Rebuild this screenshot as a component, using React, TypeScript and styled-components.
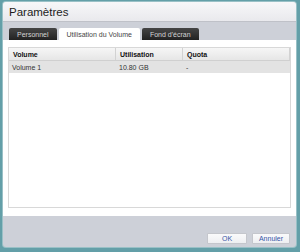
import React from 'react'
import styled, { createGlobalStyle } from 'styled-components'

const GlobalStyle = createGlobalStyle`
  html, body {
    margin: 0;
    padding: 0;
    background: #639fa8;
  }
  * {
    box-sizing: border-box;
  }
`

const Desktop = styled.div`
  width: 300px;
  height: 252px;
  padding: 2px 4px 5px 3px;
  background: #639fa8;
  font-family: 'Liberation Sans', Arial, sans-serif;
`

const Window = styled.div`
  display: flex;
  flex-direction: column;
  height: 100%;
  border-radius: 3px;
  overflow: hidden;
  background: #cdd0d8;
  box-shadow: 0 0 0 1px rgba(255, 255, 255, 0.35);
`

const TitleBar = styled.div`
  height: 20px;
  display: flex;
  align-items: center;
  padding-left: 6px;
  font-size: 11.5px;
  color: #1c1c1c;
  background: linear-gradient(#f7f7f9, #e9e9ed);
  border-bottom: 1px solid #bfc1c8;
`

const TabBand = styled.div`
  display: flex;
  align-items: flex-end;
  gap: 2px;
  padding: 6px 0 0 6px;
`

const Tab = styled.div<{ $active?: boolean }>`
  height: 12px;
  padding: 0 8px;
  display: flex;
  align-items: center;
  font-size: 7px;
  border-radius: 2px 2px 0 0;
  color: ${(p) => (p.$active ? '#444' : '#d4d4d4')};
  background: ${(p) =>
    p.$active ? '#ffffff' : 'linear-gradient(#454545, #222222)'};
`

const Content = styled.div`
  flex: 1;
  background: #ffffff;
  padding: 7px 5px 8px 5px;
  display: flex;
`

const TableBox = styled.div`
  flex: 1;
  border: 1px solid #d8d8d8;
  display: flex;
  flex-direction: column;
`

const Row = styled.div<{ $head?: boolean }>`
  display: grid;
  grid-template-columns: 107px 67px 1fr;
  height: ${(p) => (p.$head ? '13px' : '12px')};
  background: ${(p) =>
    p.$head ? 'linear-gradient(#f6f6f6, #e6e6e6)' : '#e3e3e3'};
  border-bottom: ${(p) => (p.$head ? '1px solid #d0d0d0' : 'none')};
  font-size: 7px;
  font-weight: ${(p) => (p.$head ? 'bold' : 'normal')};
  color: ${(p) => (p.$head ? '#111' : '#333')};
`

const Cell = styled.div<{ $head?: boolean }>`
  display: flex;
  align-items: center;
  padding-left: ${(p) => (p.$head ? '4px' : '3px')};
  border-right: ${(p) => (p.$head ? '1px solid #d2d2d2' : 'none')};
`

const Footer = styled.div`
  height: 31px;
  display: flex;
  justify-content: flex-end;
  align-items: flex-start;
  gap: 5px;
  padding: 17px 6px 0 0;
`

const Button = styled.div<{ $w: number }>`
  width: ${(p) => p.$w}px;
  height: 11px;
  display: flex;
  align-items: center;
  justify-content: center;
  background: linear-gradient(#fafafb, #eeeff2);
  border: 1px solid #c4c6cc;
  border-radius: 1px;
  font-size: 7px;
  color: #3555a6;
`

export default function App() {
  return (
    <>
      <GlobalStyle />
      <Desktop>
        <Window>
          <TitleBar>Paramètres</TitleBar>
          <TabBand>
            <Tab>Personnel</Tab>
            <Tab $active>Utilisation du Volume</Tab>
            <Tab>Fond d'écran</Tab>
          </TabBand>
          <Content>
            <TableBox>
              <Row $head>
                <Cell $head>Volume</Cell>
                <Cell $head>Utilisation</Cell>
                <Cell $head>Quota</Cell>
              </Row>
              <Row>
                <Cell>Volume 1</Cell>
                <Cell>10.80 GB</Cell>
                <Cell>-</Cell>
              </Row>
            </TableBox>
          </Content>
          <Footer>
            <Button $w={40}>OK</Button>
            <Button $w={38}>Annuler</Button>
          </Footer>
        </Window>
      </Desktop>
    </>
  )
}
